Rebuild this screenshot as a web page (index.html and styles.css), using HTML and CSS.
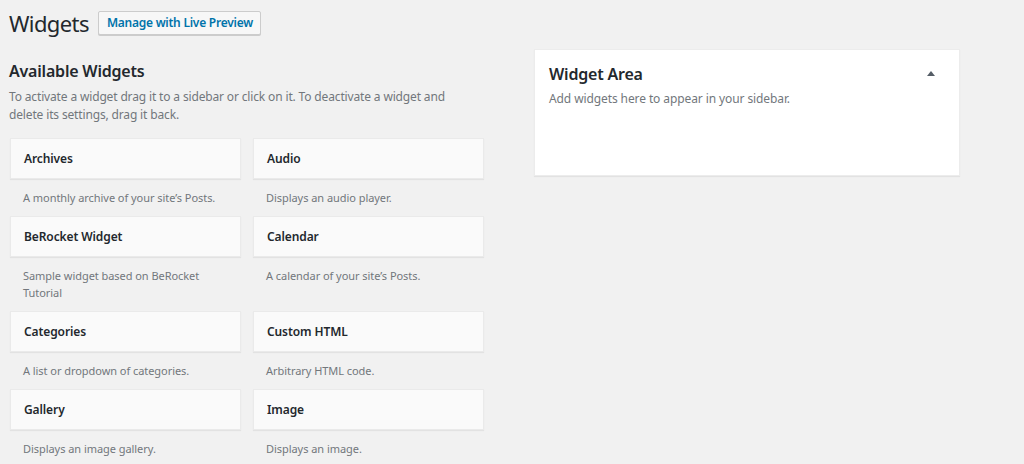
FILE: index.html
```html
<!DOCTYPE html>
<html>
<head>
<meta charset="utf-8">
<link rel="stylesheet" href="styles.css">
</head>
<body>
<div class="wrap">
  <div class="header">
    <h1 class="page-title">Widgets</h1>
    <a class="btn">Manage with Live Preview</a>
  </div>
  <div class="columns">
    <div class="available">
      <h2 class="section-title">Available Widgets</h2>
      <p class="section-desc">To activate a widget drag it to a sidebar or click on it. To deactivate a widget and delete its settings, drag it back.</p>
      <div class="grid">
        <div class="widget"><div class="widget-top">Archives</div><div class="widget-desc">A monthly archive of your site’s Posts.</div></div>
        <div class="widget"><div class="widget-top">Audio</div><div class="widget-desc">Displays an audio player.</div></div>
        <div class="widget"><div class="widget-top">BeRocket Widget</div><div class="widget-desc">Sample widget based on BeRocket Tutorial</div></div>
        <div class="widget"><div class="widget-top">Calendar</div><div class="widget-desc">A calendar of your site’s Posts.</div></div>
        <div class="widget"><div class="widget-top">Categories</div><div class="widget-desc">A list or dropdown of categories.</div></div>
        <div class="widget"><div class="widget-top">Custom HTML</div><div class="widget-desc">Arbitrary HTML code.</div></div>
        <div class="widget"><div class="widget-top">Gallery</div><div class="widget-desc">Displays an image gallery.</div></div>
        <div class="widget"><div class="widget-top">Image</div><div class="widget-desc">Displays an image.</div></div>
      </div>
    </div>
    <div class="sidebar">
      <div class="area">
        <div class="area-head">
          <h3 class="area-title">Widget Area</h3>
          <span class="arrow"></span>
        </div>
        <p class="area-desc">Add widgets here to appear in your sidebar.</p>
      </div>
    </div>
  </div>
</div>
</body>
</html>
```
FILE: styles.css
```css
html, body { margin: 0; padding: 0; }
body {
  background: #f1f1f1;
  font-family: "Noto Sans", "Open Sans", sans-serif;
  color: #23282d;
  font-size: 13px;
  width: 1024px;
  height: 464px;
  overflow: hidden;
}
.wrap { padding: 0 0 0 9px; }
.header { display: flex; align-items: center; gap: 9px; padding-top: 9px; height: 28px; }
.page-title { margin: 0; font-size: 22px; font-weight: 400; line-height: 28px; letter-spacing: -0.6px; }
.btn {
  display: inline-block;
  border: 1px solid #cccccc;
  background: #f7f7f7;
  color: #0073aa;
  font-size: 12px;
  font-weight: 600;
  line-height: 22px;
  height: 22px;
  padding: 0 7px 0 8px;
  margin-top: -1px;
  border-radius: 2px;
  box-shadow: 0 1px 0 #cccccc;
  letter-spacing: -0.25px;
}
.columns { display: flex; gap: 51px; }
.available { width: 474px; }
.section-title { margin: 23px 0 0; font-size: 16px; font-weight: 600; line-height: 22px; letter-spacing: -0.2px; }
.section-desc { margin: 6px 0 0; max-width: 445px; color: #72777c; font-size: 12px; line-height: 18px; letter-spacing: -0.15px; }
.grid { display: grid; grid-template-columns: 231px 231px; column-gap: 12px; margin: 14px 0 0 1px; }
.widget-top {
  height: 41px;
  background: #fafafa;
  box-shadow: 0 1px 1px rgba(0,0,0,0.06);
  border: 1px solid #eaeaea;
  box-sizing: border-box;
  padding: 0 13px;
  display: flex;
  align-items: center;
  font-size: 12px;
  font-weight: 600;
  letter-spacing: -0.1px;
}
.widget-desc {
  padding: 10px 13px;
  color: #72777c;
  font-size: 11px;
  line-height: 17px;
  letter-spacing: -0.05px;
}
.sidebar { padding-top: 12px; }
.area {
  width: 426px;
  height: 127px;
  box-sizing: border-box;
  background: #ffffff;
  box-shadow: 0 1px 1px rgba(0,0,0,0.06);
  border: 1px solid #ececec;
  padding: 13px 14px 0;
}
.area-head { display: flex; align-items: center; justify-content: space-between; padding-right: 10px; }
.area-title { margin: 0; font-size: 16px; font-weight: 600; line-height: 22px; letter-spacing: -0.2px; }
.arrow {
  width: 0; height: 0;
  border-left: 4px solid transparent;
  border-right: 4px solid transparent;
  border-bottom: 5px solid #555d66;
  margin-top: -2px;
}
.area-desc { margin: 5px 0 0; color: #72777c; font-size: 12px; line-height: 18px; letter-spacing: -0.1px; }
```
